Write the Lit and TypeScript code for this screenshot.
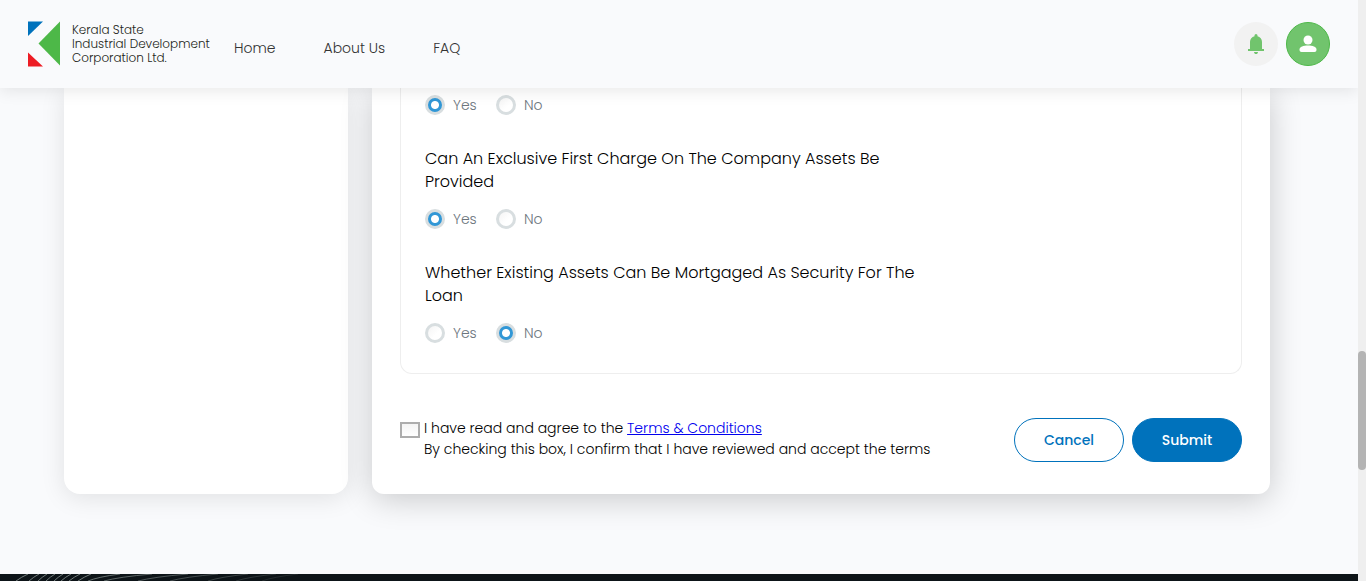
import { LitElement, html, css, svg } from "lit";
import { customElement, property } from "lit/decorators.js";

@customElement("yes-no-question")
export class YesNoQuestion extends LitElement {
  @property() name = "";
  @property() question = "";
  @property() value = "";

  static styles = css`
    :host { display: block; }
    fieldset { border: 0; margin: 0; padding: 0; min-width: 0; }
    legend {
      padding: 0;
      margin-bottom: 16px;
      max-width: 520px;
      font-size: 16px;
      line-height: 23px;
      color: #000;
    }
    .options { display: flex; gap: 19px; }
    label {
      display: flex;
      align-items: center;
      gap: 8px;
      min-width: 52px;
      height: 20px;
      font-size: 14px;
      line-height: 20px;
      color: #6c757d;
    }
    input {
      appearance: none;
      flex: none;
      width: 20px;
      height: 20px;
      margin: 0;
      border: 3px solid #d8dee0;
      border-radius: 50%;
      background: linear-gradient(135deg, #f4f4f4, #fff 60%);
    }
    input:checked {
      background: radial-gradient(circle, #fff 3.5px, #3197d6 4.5px, #3197d6 7px);
    }
  `;

  render() {
    return html`
      <fieldset aria-label=${this.question || this.name}>
        ${this.question ? html`<legend>${this.question}</legend>` : null}
        <div class="options">
          ${["Yes", "No"].map(
            (o) => html`<label>
              <input type="radio" name=${this.name} value=${o} ?checked=${this.value === o} />${o}
            </label>`
          )}
        </div>
      </fieldset>
    `;
  }
}

/* Left foot and length of each contour line in the footer artwork. */
const waves = [
  [16, 12], [29, 10], [38, 9], [46, 9], [54, 9], [61, 10], [69, 11], [78, 13],
  [88, 32], [104, 48], [138, 50], [170, 48], [208, 40], [236, 40], [262, 36],
];

@customElement("app-root")
export class AppRoot extends LitElement {
  static styles = css`
    :host {
      display: block;
      font-family: Poppins, Inter, "Open Sans", sans-serif;
      font-weight: 300;
      color: #212529;
    }
    * { box-sizing: border-box; }
    .window {
      display: grid;
      grid-template-columns: minmax(0, 1fr) 8px;
      height: 100vh;
      overflow: hidden;
    }
    .page {
      display: flex;
      flex-direction: column;
      min-height: 0;
      overflow: hidden;
      background: #f9fafc;
    }
    header {
      position: relative;
      z-index: 1;
      flex: none;
      display: flex;
      align-items: center;
      height: 88px;
      padding: 0 28px;
      background: #f9fafc;
      box-shadow: 0 2px 16px rgba(0, 0, 0, 0.1);
    }
    .brand {
      display: flex;
      align-items: center;
      gap: 12px;
      width: 182px;
      font-size: 12px;
      line-height: 14px;
      white-space: nowrap;
      color: #231f20;
      text-decoration: none;
    }
    .brand svg { flex: none; }
    nav { display: flex; gap: 48px; padding: 8px 0 0 24px; }
    nav a {
      font-size: 14px;
      line-height: 20px;
      color: #333;
      text-decoration: none;
    }
    .actions { display: flex; gap: 8px; margin-left: auto; }
    .round {
      display: grid;
      place-items: center;
      width: 44px;
      height: 44px;
      padding: 0;
      border: 0;
      border-radius: 50%;
      background: #f2f2f2;
    }
    .round.user { background: #71c46d; border: 1px solid #4db848; }
    main {
      flex: none;
      display: flex;
      gap: 24px;
      padding: 0 88px 80px 64px;
    }
    aside {
      flex: none;
      width: 284px;
      background: #fff;
      border-radius: 0 0 16px 16px;
      box-shadow: 0 4px 24px rgba(0, 0, 0, 0.1);
    }
    form {
      flex: 1;
      min-width: 0;
      padding: 0 28px 32px;
      background: #fff;
      border-radius: 0 0 12px 12px;
      box-shadow: 0 5px 32px rgba(0, 0, 0, 0.2);
    }
    .questions {
      display: grid;
      gap: 32px;
      padding: 7px 24px 30px;
      border: 1px solid #eee;
      border-top: 0;
      border-radius: 0 0 12px 12px;
    }
    .confirm {
      display: flex;
      align-items: flex-start;
      justify-content: space-between;
      gap: 24px;
      margin-top: 44px;
    }
    .terms { display: flex; gap: 4px; font-size: 14px; line-height: 21px; color: #000; }
    .terms a { color: #0000ee; }
    .terms input {
      appearance: none;
      flex: none;
      width: 20px;
      height: 16px;
      margin: 4px 0 0;
      border: 2px solid #adadad;
      background: linear-gradient(#f4f4f4, #fff);
    }
    .buttons { display: flex; gap: 8px; }
    .buttons button {
      width: 110px;
      height: 44px;
      padding: 0;
      border: 1px solid #0072bc;
      border-radius: 22px;
      font: 500 14px/20px Poppins, Inter, "Open Sans", sans-serif;
      color: #0072bc;
      background: #fff;
    }
    .buttons .primary { color: #fff; background: #0072bc; }
    footer { flex: 1; min-height: 0; overflow: hidden; background: #0d1418; }
    footer svg { display: block; }
    .scroll {
      display: flex;
      flex-direction: column;
      background: #efefef;
    }
    .scroll::before { content: ""; flex: 351 0 0; }
    .scroll::after { content: ""; flex: 111 0 0; }
    .thumb { flex: 119 0 0; border-radius: 4px; background: #b4b4b4; }
  `;

  render() {
    return html`
      <div class="window">
        <div class="page">
          <header>
            <a class="brand" href="#">
              <svg width="32" height="46" viewBox="0 0 32 46" aria-hidden="true">
                <path d="M0 .5h15L0 15z" fill="#0072bc" />
                <path d="M32 .5v44L10.500 22.500z" fill="#4db848" />
                <path d="M0 31.500v14h15z" fill="#ed1c24" />
              </svg>
              <span>Kerala State<br />Industrial Development<br />Corporation Ltd.</span>
            </a>
            <nav>
              <a href="#">Home</a>
              <a href="#">About Us</a>
              <a href="#">FAQ</a>
            </nav>
            <div class="actions">
              <button class="round" type="button" aria-label="Notifications">
                <svg width="16" height="20" viewBox="0 0 16 20" fill="#71c46d">
                  <path d="M0 17v-2h2V8q0-2.100 1.250-3.700T6.500 2.200V1.500q0-.62.440-1.060T8 0t1.060.44T9.500 1.500v.7q2 .5 3.250 2.100T14 8v7h2v2zM8 20q-.82 0-1.410-.59T6 18h4q0 .82-.590 1.410T8 20" />
                </svg>
              </button>
              <button class="round user" type="button" aria-label="Account">
                <svg width="18" height="18" viewBox="0 0 18 18" fill="#fff">
                  <circle cx="9" cy="5" r="4.500" />
                  <path d="M.5 14.500C.5 11.800 4.500 10.500 9 10.500s8.500 1.300 8.500 4V15a2 2 0 0 1-2 2h-13a2 2 0 0 1-2-2z" />
                </svg>
              </button>
            </div>
          </header>
          <main>
            <aside></aside>
            <form>
              <div class="questions">
                <yes-no-question name="collateral" value="Yes"></yes-no-question>
                <yes-no-question
                  name="charge"
                  question="Can An Exclusive First Charge On The Company Assets Be Provided"
                  value="Yes"
                ></yes-no-question>
                <yes-no-question
                  name="mortgage"
                  question="Whether Existing Assets Can Be Mortgaged As Security For The Loan"
                  value="No"
                ></yes-no-question>
              </div>
              <div class="confirm">
                <div class="terms">
                  <input type="checkbox" id="agree" />
                  <label for="agree">
                    I have read and agree to the <a href="#">Terms &amp; Conditions</a><br />
                    By checking this box, I confirm that I have reviewed and accept the terms
                  </label>
                </div>
                <div class="buttons">
                  <button type="button">Cancel</button>
                  <button type="button" class="primary">Submit</button>
                </div>
              </div>
            </form>
          </main>
          <footer>
            <svg width="340" height="40" viewBox="0 0 340 40" fill="none" stroke="#7c8685" aria-hidden="true">
              ${waves.map(
                ([x, run], i) =>
                  svg`<path d="M${x} 7Q${x + run * (i < 8 ? 0.45 : 0.3)} 3 ${x + run} 0" opacity=${i < 8 ? 0.9 : Math.max(0.15, 0.8 - (i - 8) * 0.1)} />`
              )}
            </svg>
          </footer>
        </div>
        <div class="scroll"><div class="thumb"></div></div>
      </div>
    `;
  }
}
